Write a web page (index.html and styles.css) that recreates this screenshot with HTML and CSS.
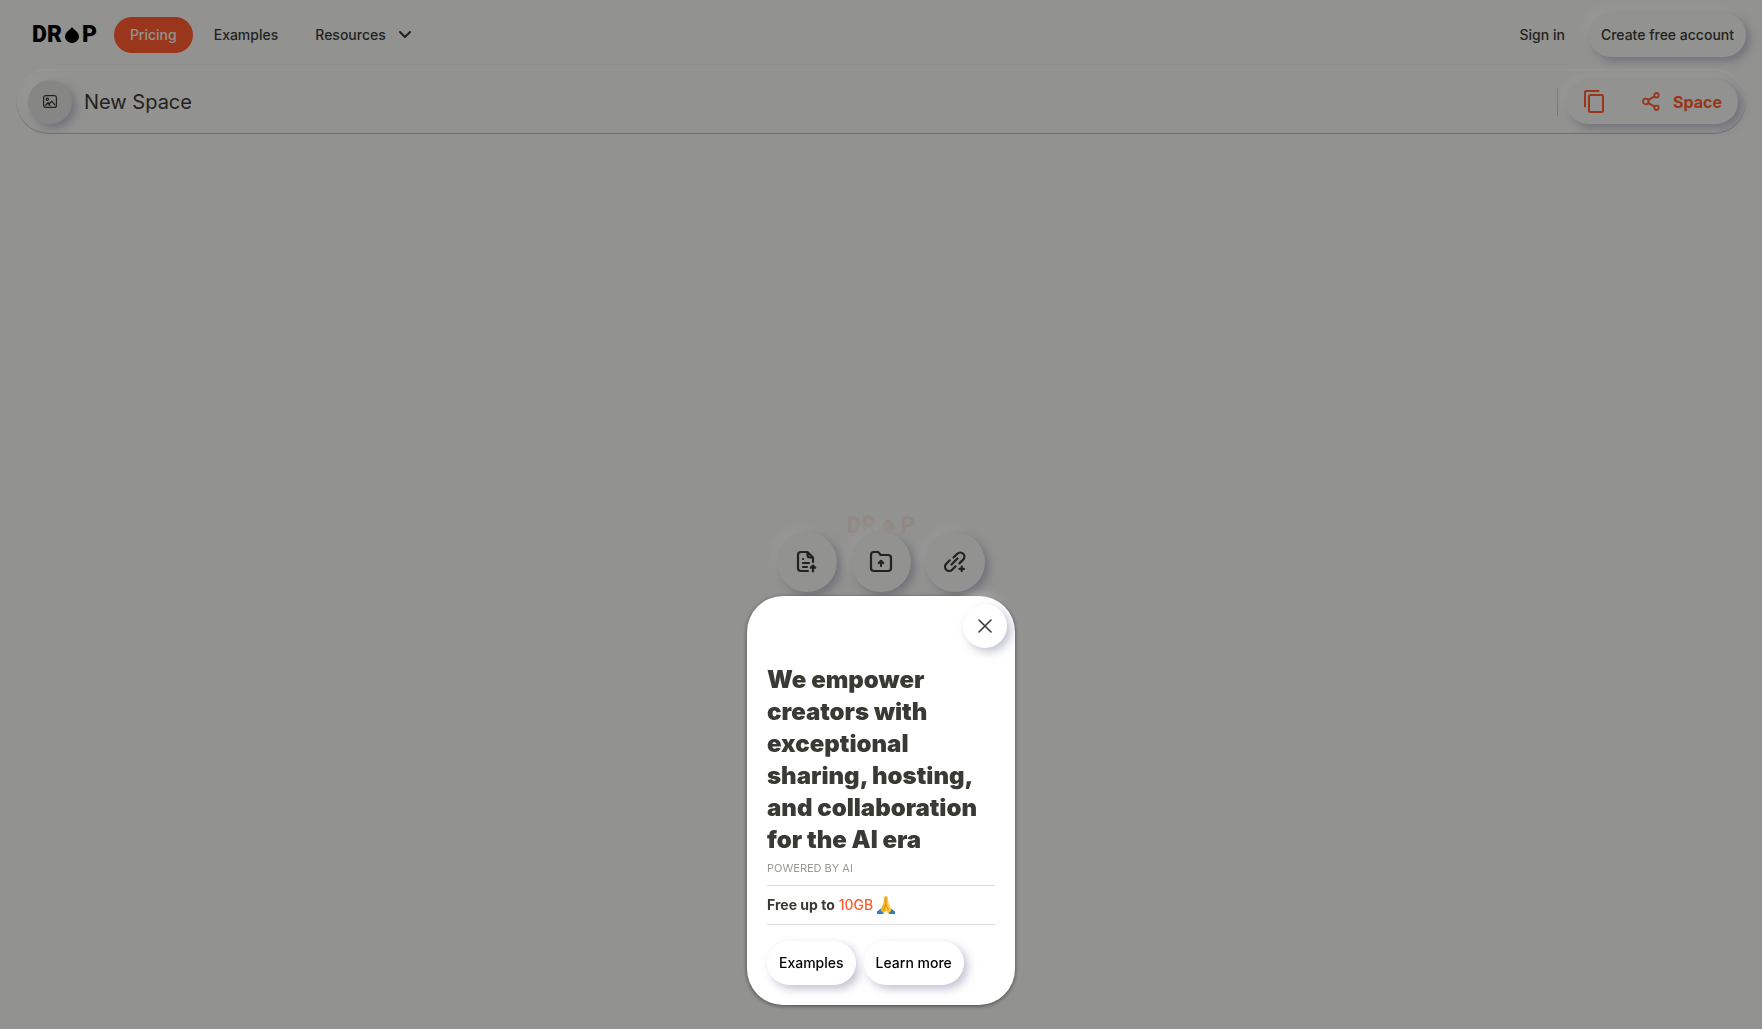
FILE: index.html
```html
<!DOCTYPE html>
<html lang="en">
<head>
<meta charset="utf-8">
<meta name="viewport" content="width=device-width, initial-scale=1">
<title>Drop - New Space</title>
<link rel="stylesheet" href="styles.css">
</head>
<body>
<div class="page">
  <header class="header">
    <a class="logo" href="#" aria-label="Drop home"><span>DR</span><svg class="logo-drop" viewBox="0 0 14 16"><path d="M7 0C8.500 2.500 14 5 14 9.500a7 6.500 0 0 1-14 0C0 5 5.500 2.500 7 0Z"/></svg><span>P</span></a>
    <nav class="nav">
      <a class="nav-link nav-link-active" href="#">Pricing</a>
      <a class="nav-link" href="#">Examples</a>
      <button class="nav-link nav-menu" type="button">Resources
        <svg class="chevron" viewBox="0 0 12 8"><path d="m1 1 5 5 5-5"/></svg>
      </button>
    </nav>
    <div class="account">
      <a class="sign-in" href="#">Sign in</a>
      <a class="raised pill" href="#">Create free account</a>
    </div>
  </header>

  <section class="space-bar">
    <button class="raised avatar" type="button" aria-label="Choose image">
      <svg viewBox="0 0 14 13"><rect x=".6" y=".6" width="12.800" height="11.800" rx="2"/><circle cx="4.400" cy="4.200" r="1.100"/><path d="m2.500 10.500 2.600-3 1.500 1 2.200-2.400 3 3.800M5 8.500l2 2"/></svg>
    </button>
    <h1 class="space-name">New Space</h1>
    <div class="space-actions">
      <div class="raised share-pill">
        <button class="share-button" type="button" aria-label="Copy">
          <svg class="copy-icon" viewBox="0 0 20 23"><path d="M1 16.500V2.500A1.500 1.500 0 0 1 2.500 1H14.500"/><rect x="5" y="5" width="14" height="17" rx="1.500"/></svg>
        </button>
        <button class="share-button" type="button">
          <svg class="share-icon" viewBox="0 0 18 19"><circle cx="3.800" cy="9.500" r="2.800"/><circle cx="14.500" cy="3.200" r="2.200"/><circle cx="14.500" cy="15.800" r="2.200"/><path d="m6.200 8.100 6.400-3.700M6.200 10.900l6.400 3.700"/></svg>
          Space
        </button>
      </div>
    </div>
  </section>

  <main class="canvas">
    <div class="logo watermark"><span>DR</span><svg class="logo-drop" viewBox="0 0 14 16"><path d="M7 0C8.500 3 14 6 14 10a3.600 3.600 0 0 1-5.500 2.800L10 16H4l1.500-3.200A3.600 3.600 0 0 1 0 10C0 6 5.500 3 7 0Z"/></svg><span>P</span></div>
    <div class="upload-row">
      <button class="raised upload" type="button" aria-label="Upload file">
        <svg viewBox="0 0 24 24"><path d="M10 21H6a3 3 0 0 1-3-3V5a3 3 0 0 1 3-3h6.500l5.500 5.500V12M12.500 2.500V5a2.500 2.500 0 0 0 2.500 2.500h2.500M8 13h6M8 17h4M8 9h.1M10 21h3M18 21.500V16M15.800 17.800 18 15.600l2.200 2.200"/></svg>
      </button>
      <button class="raised upload" type="button" aria-label="Upload folder">
        <svg viewBox="0 0 24 24"><path d="M2 5a3 3 0 0 1 3-3h3.500a2 2 0 0 1 1.600.8L11.500 5H19a3 3 0 0 1 3 3v10a3 3 0 0 1-3 3H5a3 3 0 0 1-3-3ZM12 16v-5M9.800 13 12 10.800 14.200 13"/></svg>
      </button>
      <button class="raised upload" type="button" aria-label="Add link">
        <svg viewBox="0 0 24 24"><path d="m8.500 14.500 6-6M10.500 7.500l3.800-3.800a4.100 4.100 0 0 1 5.900 5.900l-3.800 3.800M12.600 16.300l-3.500 3.500a4.100 4.100 0 0 1-5.900-5.900l3.600-3.600M18.700 16.500v4.600M16.400 18.800h4.600"/></svg>
      </button>
    </div>
  </main>
</div>

<div class="overlay">
  <section class="modal" role="dialog" aria-modal="true" aria-labelledby="pitch">
    <button class="raised close" type="button" aria-label="Close"><svg viewBox="0 0 14 14"><path d="m1 1 12 12M13 1 1 13"/></svg></button>
    <h2 class="pitch" id="pitch">We empower creators with exceptional sharing, hosting, and collaboration for the AI era</h2>
    <p class="powered">POWERED BY AI</p>
    <p class="offer">Free up to <span class="quota">10GB</span>
      <svg class="hands" viewBox="0 0 18 18" role="img" aria-label="Folded hands"><path fill="#2f7fc4" d="M0 15.500 4 12.500 7.500 16 6 18H0ZM18 15.500 14 12.500 10.500 16 12 18h6Z"/><path fill="#f7b51d" d="M8.800.3C7.700 0 7.200.7 7.100 2L6.500 7 4.200 12.200 3.700 14.500 6.500 17.200 9 14.800Z"/><path fill="#ffc93c" d="M9.200.3C10.300 0 10.800.7 10.900 2l.6 5 2.300 5.200.5 2.300-2.800 2.700L9 14.800Z"/><path fill="none" stroke="#c77a16" stroke-width=".8" d="M9 1v8M9 9c-1.500 1-1 3.500-2.500 5M9 9c1.500 1 1 3.500 2.500 5"/></svg>
    </p>
    <div class="modal-actions">
      <a class="raised pill" href="#">Examples</a>
      <a class="raised pill" href="#">Learn more</a>
    </div>
  </section>
</div>
</body>
</html>
```

FILE: styles.css
```css
* { box-sizing: border-box; }

body {
  margin: 0;
  font: 500 14px/20px Inter, sans-serif;
  color: #393a34;
  background: #f3f3f0;
}

a { color: inherit; text-decoration: none; }

button {
  padding: 0;
  border: 0;
  font: inherit;
  color: inherit;
  background: none;
  cursor: pointer;
}

svg {
  flex: none;
  fill: none;
  stroke: currentColor;
  stroke-linecap: round;
  stroke-linejoin: round;
}

.page {
  display: flex;
  flex-direction: column;
  min-height: 100vh;
}

.raised {
  display: flex;
  align-items: center;
  justify-content: center;
  background: #f3f3f0;
  border-radius: 32px;
  box-shadow: 4px 4px 8px rgba(136, 138, 165, 0.5), -6px -6px 12px rgba(255, 255, 255, 0.8);
}

.pill {
  height: 44px;
  padding: 0 12px;
  white-space: nowrap;
}

.header {
  display: flex;
  align-items: center;
  height: 69px;
  padding: 0 16px 0 32px;
}

.logo {
  display: flex;
  align-items: center;
  gap: 3px;
  font: 900 23px/24px Roboto, sans-serif;
  color: #000;
}

.logo-drop {
  width: 14px;
  height: 16px;
  fill: currentColor;
  stroke: none;
}

.nav {
  display: flex;
  align-items: center;
  gap: 5px;
  margin-left: 17px;
}

.nav-link {
  display: flex;
  align-items: center;
  gap: 13px;
  height: 36px;
  padding: 0 16px;
  border-radius: 18px;
}

.nav-link-active { color: #f3f3f0; background: #ff5a2d; }

.chevron { width: 12px; height: 8px; stroke-width: 2; }

.account {
  display: flex;
  align-items: center;
  gap: 24px;
  margin-left: auto;
}

.space-bar {
  display: flex;
  align-items: center;
  gap: 12px;
  height: 65px;
  margin: 0 16px;
  padding: 0 8px 0 12px;
  border-radius: 33px;
  box-shadow: inset 0 1px 1px #fff, inset 0 -1px 1px #b8bac0;
}

.avatar {
  width: 44px;
  height: 44px;
  background: #e0e0dc;
}

.avatar svg { width: 14px; height: 13px; stroke-width: 1.2; }

.space-name {
  margin: 0;
  font-size: 20px;
  line-height: 28px;
  font-weight: 400;
}

.space-actions {
  display: flex;
  align-items: center;
  margin-left: auto;
}

.space-actions::before {
  content: "";
  width: 1px;
  height: 28px;
  margin-right: 8px;
  background: #c3c4ca;
}

.share-pill {
  gap: 38px;
  height: 44px;
  padding: 0 16px 0 18px;
}

.share-button {
  display: flex;
  align-items: center;
  gap: 13px;
  font-size: 16px;
  font-weight: 700;
  color: #ff5a2d;
}

.copy-icon { width: 20px; height: 23px; stroke-width: 2; }
.share-icon { width: 18px; height: 19px; stroke-width: 1.8; }

.canvas {
  display: flex;
  flex: 1;
  flex-direction: column;
  align-items: center;
  justify-content: center;
  padding-bottom: 56px;
}

.watermark {
  gap: 5px;
  height: 16px;
  padding-top: 4px;
  color: rgba(255, 90, 45, 0.1);
}

.upload-row { display: flex; gap: 14px; }

.upload { width: 60px; height: 60px; }
.upload svg { width: 24px; height: 24px; stroke-width: 2.2; }

.overlay {
  position: fixed;
  inset: 0;
  display: flex;
  align-items: flex-end;
  justify-content: center;
  padding: 24px;
  background: rgba(0, 0, 0, 0.4);
}

.modal {
  width: 268px;
  padding: 8px 20px 20px;
  border-radius: 36px;
  background: #fff;
  box-shadow: 0 1px 4px rgba(0, 0, 0, 0.5);
}

.modal .raised { background: #fff; }

.modal .close {
  width: 44px;
  height: 44px;
  margin: 0 -12px 16px auto;
}

.close svg { width: 14px; height: 14px; stroke-width: 1.6; }

.pitch {
  margin: 0;
  font-size: 24px;
  line-height: 32px;
  font-weight: 900;
}

.powered {
  margin: 0;
  padding: 4px 0 9px;
  font-size: 11px;
  line-height: 16px;
  font-weight: 400;
  color: #9b9b92;
}

.offer {
  display: flex;
  align-items: center;
  gap: 4px;
  height: 40px;
  margin: 0 0 16px;
  border: solid #dcdcdc;
  border-width: 1px 0;
  font-weight: 700;
}

.quota { font-weight: 500; color: #ff5a2d; }

.hands { width: 18px; height: 18px; stroke: none; }

.modal-actions {
  display: flex;
  gap: 8px;
  color: #000;
}
```
